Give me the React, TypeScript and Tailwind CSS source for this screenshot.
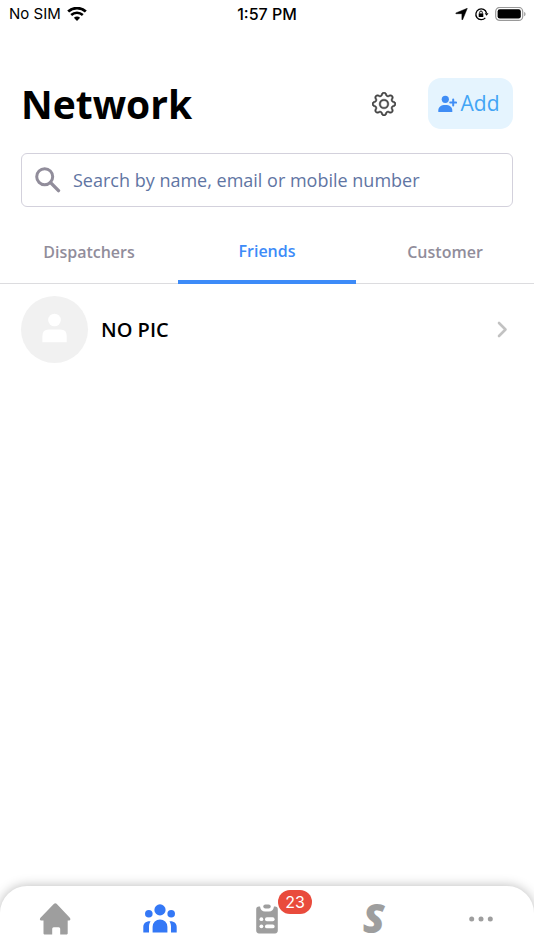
import { useState } from "react";
import { BsGear } from "react-icons/bs";

const TABS = ["Dispatchers", "Friends", "Customer"];
const CONTACTS = [{ id: 1, name: "NO PIC" }];

function StatusBar() {
  return (
    <div className="grid h-7 grid-cols-3 items-center px-2 font-['Inter',sans-serif] text-[15px] leading-7">
      <div className="flex items-center gap-1.5 pl-px">
        <span>No SIM</span>
        <svg width="20" height="15" viewBox="0 0 20 15" fill="none" stroke="#000">
          <path d="M1.2 4.6C6.1 0 13.9 0 18.8 4.6" strokeWidth="2.8" />
          <path d="M4.2 8C7.5 5 12.5 5 15.8 8" strokeWidth="2.5" />
          <path d="M10 13.9 6.9 10.8C8.7 9.1 11.3 9.1 13.1 10.8Z" fill="#000" stroke="none" />
        </svg>
      </div>
      <span className="text-center text-base leading-7 font-medium">1:57 PM</span>
      <div className="flex items-center justify-end gap-1.5">
        <svg width="13" height="12" viewBox="0 0 12 12">
          <path
            d="M11.8.3 7.2 11.6Q6.6 12.3 6.4 11.4V6.1Q6.4 5.7 6 5.7H.7Q-.2 5.4.5 4.9Z"
            stroke="#000"
            strokeWidth=".5"
          />
        </svg>
        <svg width="15" height="14" viewBox="0 0 14 14" fill="none" stroke="#000" strokeWidth="1.3">
          <path d="M10.8 10.9A5.4 5.4 0 1 1 12 6" />
          <path d="M10.2 6.2h3.8L12.1 8.8Z" fill="#000" stroke="none" />
          <path d="M4.2 6.4h4.6v3.6H4.2z" fill="#000" stroke="none" />
          <path d="M5.2 6.5V5.3a1.3 1.3 0 0 1 2.6 0v1.2" strokeWidth="1" />
        </svg>
        <svg width="31" height="15" viewBox="0 0 31 15">
          <rect x=".7" y=".4" width="27" height="13" rx="4" fill="none" stroke="#999" strokeWidth="1.2" />
          <rect x="2.6" y="2.3" width="23.2" height="9.2" rx="2.2" />
          <path d="M29.2 4.7c1.8.8 1.8 3.8 0 4.6z" fill="#999" />
        </svg>
      </div>
    </div>
  );
}

function AddUserIcon() {
  return (
    <svg width="19" height="18" viewBox="0 0 19 18" fill="#3f8df5">
      <circle cx="7.3" cy="4.3" r="3.6" />
      <path d="M.3 17v-1.5c0-3.600 2.600-5.600 7-5.600s7 2 7 5.600V17z" />
      <path d="M15.2 4.6v6M12.2 7.6h6" stroke="#3f8df5" strokeWidth="2" strokeLinecap="round" />
    </svg>
  );
}

function SearchIcon() {
  return (
    <svg width="26" height="26" viewBox="0 0 26 26" fill="none" stroke="#918d9b">
      <circle cx="9.7" cy="9.7" r="8" strokeWidth="3" />
      <path d="m15.6 15.6 7.9 8" strokeWidth="3.4" strokeLinecap="round" />
    </svg>
  );
}

function Avatar() {
  return (
    <span className="flex size-[67px] items-center justify-center rounded-full bg-[#f1f1f1]">
      <svg width="25" height="30" viewBox="0 0 26 30" fill="#fff" className="mb-1">
        <circle cx="13" cy="6.7" r="6.6" />
        <path d="M.4 29.8v-6.6q0-6.7 6.7-6.7h12q6.6 0 6.6 6.7v6.6z" />
      </svg>
    </span>
  );
}

function HomeIcon() {
  return (
    <svg width="32" height="32" viewBox="0 0 32 32" fill="#9e9e9e">
      <path d="M15 .8q1.3-1.2 2.6 0L30.8 14.7q.9 1 .4 2.1-.2.6-1 .6h-1.5v13.2q0 .8-.8.8h-6.7v-5.7q0-1.5-1.5-1.5h-5q-1.5 0-1.5 1.5v5.7H5.3q-.8 0-.8-.8V17.4H2q-.7 0-1-.6-.4-1.1.5-2z" />
    </svg>
  );
}

function PeopleIcon() {
  return (
    <svg width="34" height="29" viewBox="0 0 34 29" fill="#3478f6">
      <circle cx="17" cy="5.9" r="5.6" />
      <circle cx="5.8" cy="9.7" r="3.8" />
      <circle cx="28.2" cy="9.7" r="3.8" />
      <path d="M9.6 28.5v-5.7a7.4 7.4 0 0 1 14.8 0v5.7z" />
      <path d="M.3 28.5v-5.2c0-4 2.6-6.2 7.2-5.9-1.1 1.5-1.5 3.3-1.5 5.4v5.7zM33.7 28.5v-5.2c0-4-2.6-6.2-7.2-5.9 1.1 1.5 1.5 3.3 1.5 5.4v5.7z" />
    </svg>
  );
}

function ClipboardIcon() {
  return (
    <svg width="22" height="30" viewBox="0 0 22 30">
      <path
        d="M3 2.6h1q.8 5 5 5h4q4.2 0 5-5h1q2.8 0 2.8 2.8v21.2q0 2.8-2.8 2.8H3q-2.8 0-2.8-2.8V5.4Q.2 2.6 3 2.6z"
        fill="#9e9e9e"
      />
      <rect x="7.3" y=".4" width="7.4" height="4" rx="2" fill="#9e9e9e" />
      <g fill="#fff">
        <circle cx="5.4" cy="15.2" r="1.9" />
        <circle cx="5.4" cy="22.3" r="1.9" />
        <rect x="9" y="13.3" width="9.6" height="3.9" rx="1.9" />
        <rect x="9" y="20.4" width="9.6" height="3.9" rx="1.9" />
      </g>
    </svg>
  );
}

function MoreIcon() {
  return (
    <svg width="24" height="6" viewBox="0 0 24 6" fill="#9e9e9e">
      <circle cx="2.7" cy="3" r="2.5" />
      <circle cx="12" cy="3" r="2.5" />
      <circle cx="21.3" cy="3" r="2.5" />
    </svg>
  );
}

function BottomNav() {
  return (
    <nav className="grid h-16 grid-cols-5 rounded-t-[27px] bg-white pt-px shadow-[0_0_12px_rgba(0,0,0,0.28)]">
      <button aria-label="Home" className="flex items-center justify-center pl-1">
        <HomeIcon />
      </button>
      <button aria-label="Network" className="flex items-center justify-center">
        <PeopleIcon />
      </button>
      <button aria-label="Tasks" className="flex items-center justify-center">
        <span className="relative">
          <ClipboardIcon />
          <span className="absolute -top-3.5 left-[22px] flex h-6 w-[34px] items-center justify-center rounded-full bg-[#e94b3c] font-['Inter',sans-serif] text-base text-white">
            23
          </span>
        </span>
      </button>
      <button className="flex items-center justify-center pb-0.5 font-['Noto_Sans',sans-serif] text-[40px] leading-none font-black text-[#9e9e9e] italic">
        S
      </button>
      <button aria-label="More" className="flex items-center justify-center">
        <MoreIcon />
      </button>
    </nav>
  );
}

export default function App() {
  const [tab, setTab] = useState("Friends");
  const [query, setQuery] = useState("");

  return (
    <div className="flex min-h-screen flex-col overflow-hidden bg-white font-['Open_Sans',sans-serif] text-black">
      <StatusBar />
      <header className="mt-[50px] flex items-center px-[21px]">
        <h1 className="flex-1 text-[39px] leading-[51px] font-bold">Network</h1>
        <button aria-label="Settings" className="mr-8 text-[#444]">
          <BsGear size={24} stroke="currentColor" strokeWidth={0.3} />
        </button>
        <button className="flex h-[51px] w-[85px] items-center justify-center gap-1 rounded-[13px] bg-[#e5f4fe] pr-1 text-[21px] text-[#42a5f5]">
          <AddUserIcon />
          Add
        </button>
      </header>
      <label className="mx-[21px] mt-6 flex h-[54px] items-center gap-3 rounded-md border border-[#d3d1dc] px-[13px]">
        <SearchIcon />
        <input
          aria-label="Search"
          value={query}
          onChange={(e) => setQuery(e.target.value)}
          placeholder="Search by name, email or mobile number"
          className="min-w-0 flex-1 text-lg outline-none placeholder:text-[#5f75a3]"
        />
      </label>
      <div role="tablist" className="mt-3 grid h-[65px] grid-cols-3 text-base font-semibold">
        {TABS.map((name) => (
          <button
            key={name}
            role="tab"
            aria-selected={tab === name}
            onClick={() => setTab(name)}
            className={
              tab === name
                ? "border-b-4 border-[#3d8bf8] pt-0.5 text-[#3d8bf8]"
                : "border-b border-[#dcdcdf] pt-0.5 text-[#918d9b]"
            }
          >
            {name}
          </button>
        ))}
      </div>
      <main className="flex-1">
        {CONTACTS.map(({ id, name }) => (
          <button key={id} className="flex w-full items-center gap-[13px] px-[21px] pt-3 text-left">
            <Avatar />
            <span className="flex-1 text-xl font-semibold">{name}</span>
            <svg width="16" height="18" viewBox="0 0 16 18" fill="none" stroke="#c2c2c2">
              <path d="m2 2 6.5 6.5L2 15" strokeWidth="2.6" strokeLinecap="round" strokeLinejoin="round" />
            </svg>
          </button>
        ))}
      </main>
      <BottomNav />
    </div>
  );
}
